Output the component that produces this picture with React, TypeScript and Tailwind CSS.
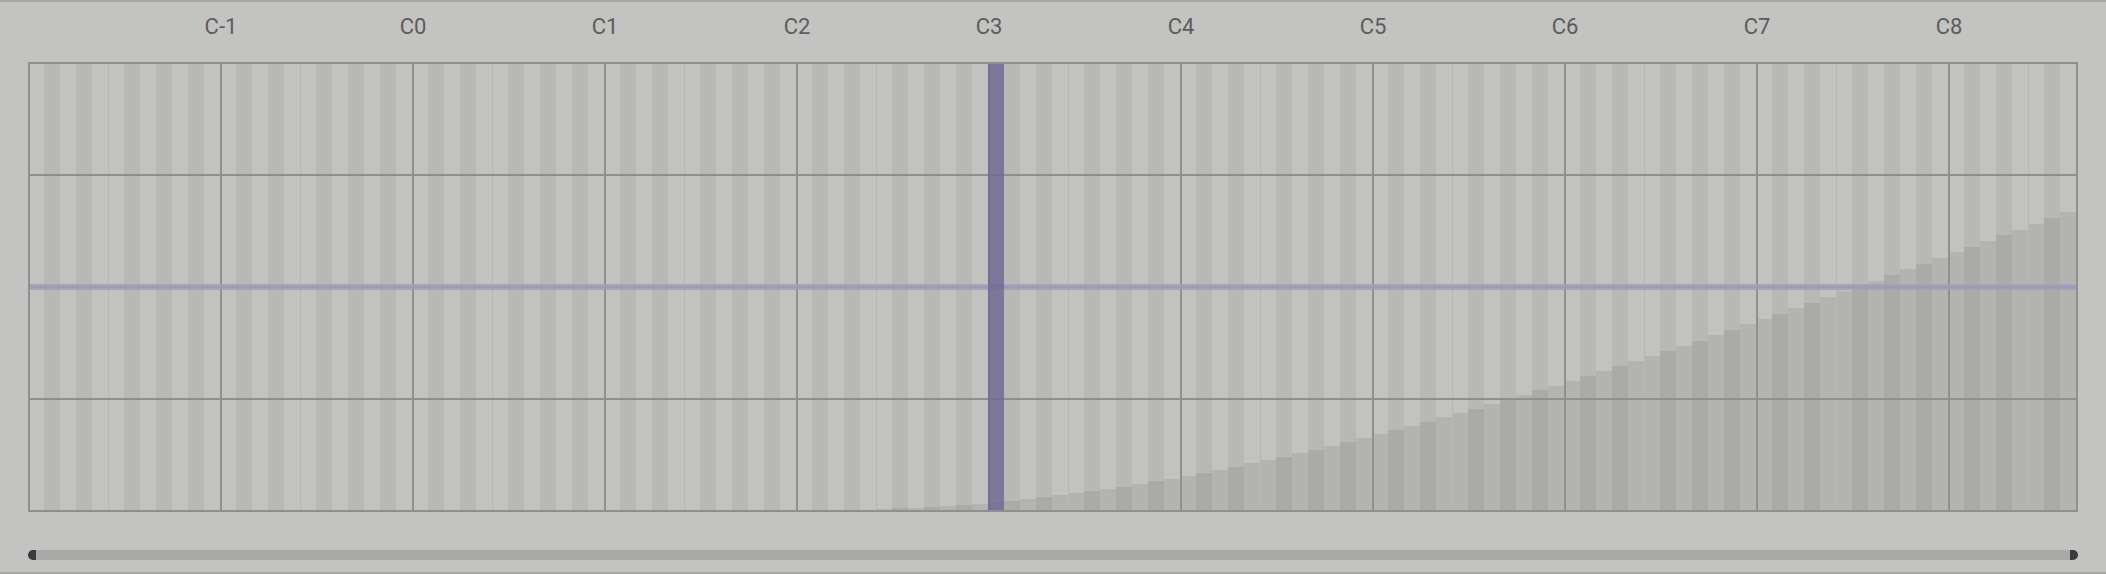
import React from "react";

const BLACK = [0, 1, 0, 1, 0, 0, 1, 0, 1, 0, 1, 0];

const CURVE: Record<number, number> = {
  52: 0.3, 53: 0.7, 54: 1.5, 55: 2, 56: 3, 57: 3.7, 58: 5, 59: 6.3, 60: 7.5, 61: 9,
  62: 11, 63: 13, 64: 15, 65: 17, 66: 19, 67: 21, 68: 23.3, 69: 26, 70: 28.7, 71: 31.3,
  72: 34.3, 73: 37.3, 74: 40, 75: 43.3, 76: 46.7, 77: 50, 78: 53.3, 79: 57, 80: 60.3,
  81: 64.3, 82: 68, 83: 72.3, 84: 76, 85: 80, 86: 84, 87: 88.3, 88: 92.7, 89: 97,
  90: 101.3, 91: 106, 92: 110.3, 93: 115, 94: 119.7, 95: 124.3, 96: 129.3, 97: 134.3,
  98: 139.3, 99: 144.3, 100: 149.3, 101: 154.3, 102: 159.3, 103: 164.3, 104: 169.3,
  105: 174.7, 106: 180.3, 107: 185.7, 108: 191, 109: 196.3, 110: 202, 111: 207.3,
  112: 212.7, 113: 218.7, 114: 224, 115: 229.3, 116: 235, 117: 240.7, 118: 246.3,
  119: 252, 120: 257.7, 121: 263.3, 122: 269, 123: 275, 124: 280.3, 125: 286.3,
  126: 292, 127: 297.7,
};

const LABELS = ["C-1", "C0", "C1", "C2", "C3", "C4", "C5", "C6", "C7", "C8"];

function Key({ index }: { index: number }) {
  const n = index % 12;
  const black = BLACK[n] === 1;
  const h = CURVE[index] ?? 0;
  return (
    <div
      className={`flex flex-col justify-end w-[16px] shrink-0 h-full ${
        black ? "bg-[#b8b8b6]" : "bg-[#c2c2c0]"
      } ${n === 5 ? "border-l border-[#b6b6b4]" : ""}`}
    >
      {h > 0 && (
        <div
          className="w-full bg-[rgba(0,0,0,0.075)]"
          style={{ height: Math.round(h) + 2 }}
        />
      )}
    </div>
  );
}

export default function App() {
  const keys = Array.from({ length: 128 }, (_, i) => i);
  const octaveLines = Array.from({ length: 10 }, (_, i) => (i + 1) * 192);
  const rowLines = [112, 224, 336];
  return (
    <div
      className="w-[2106px] h-[574px] bg-[#c3c3c1] border-t-2 border-b-2 border-[#a7a7a5] flex flex-col"
      style={{ fontFamily: "Roboto, 'Liberation Sans', sans-serif" }}
    >
      {/* labels */}
      <div className="flex pl-[125px] mt-[12px] h-[26px] text-[22px] leading-[26px] text-[#5c5c5c]">
        {LABELS.map((l) => (
          <div key={l} className="w-[192px] shrink-0 text-center">
            {l}
          </div>
        ))}
      </div>

      {/* grid */}
      <div className="relative ml-[28px] mt-[22px] w-[2050px] h-[450px] overflow-hidden">
        <div className="flex h-full">
          {keys.map((k) => (
            <Key key={k} index={k} />
          ))}
        </div>
        {/* inner octave lines */}
        {octaveLines.map((x) => (
          <div
            key={x}
            className="absolute top-0 bottom-0 w-[2px] bg-[#8f8f8d]"
            style={{ left: x }}
          />
        ))}
        {/* row lines */}
        {rowLines.map((y) => (
          <div
            key={y}
            className="absolute left-0 right-0 h-[2px] bg-[#8f8f8d]"
            style={{ top: y }}
          />
        ))}
        {/* horizontal marker band */}
        <div className="absolute left-[2px] right-[2px] top-[222px] h-[6px] bg-[rgba(163,157,188,0.85)]" />
        {/* selected key */}
        <div className="absolute left-[960px] w-[16px] top-[2px] bottom-[2px] bg-[rgba(112,102,146,0.82)]" />
        {/* frame */}
        <div className="absolute inset-0 border-2 border-[#8f8f8d]" />
      </div>

      {/* range bar */}
      <div className="flex ml-[28px] mt-[38px] w-[2050px] h-[10px]">
        <div className="w-[8px] h-full bg-[#393b3d] rounded-l-[5px]" />
        <div className="flex-1 h-full bg-[#a9a9a7]" />
        <div className="w-[8px] h-full bg-[#393b3d] rounded-r-[5px]" />
      </div>
    </div>
  );
}
